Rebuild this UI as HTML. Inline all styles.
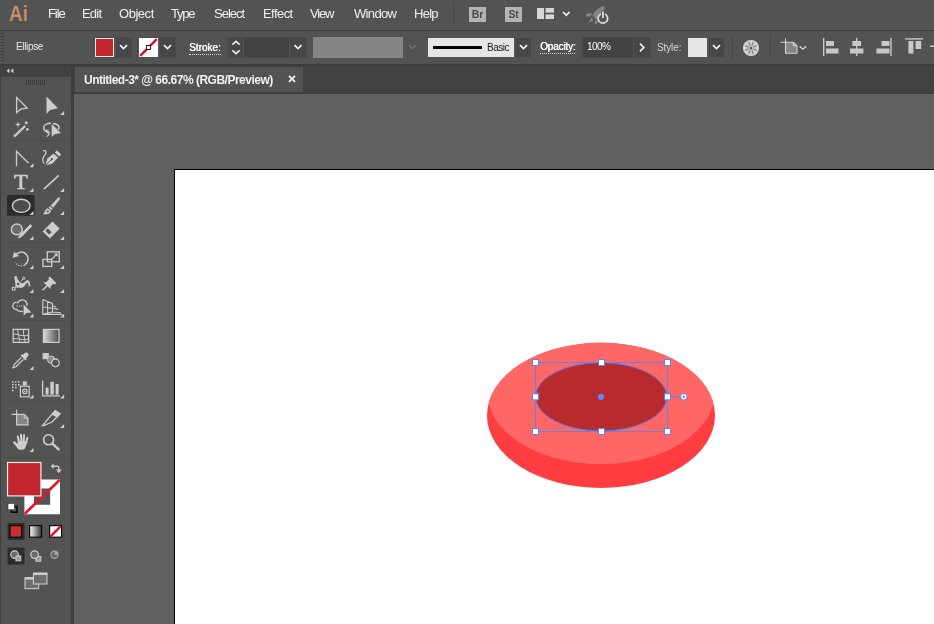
<!DOCTYPE html>
<html>
<head>
<meta charset="utf-8">
<title>Untitled-3</title>
<style>
html,body{margin:0;padding:0;}
body{width:934px;height:624px;overflow:hidden;background:#606060;font-family:"Liberation Sans","DejaVu Sans",sans-serif;position:relative;color:#e8e8e8;}
.abs{position:absolute;}
#menubar{left:0;top:0;width:934px;height:30px;background:#535353;}
.m,.lbl,#tabtext,.appbtn,#ailogo,#tools{will-change:transform;}
#menubar .m{position:absolute;top:6.4px;font-size:13px;color:#f0f0f0;line-height:16px;white-space:nowrap;}
#ailogo{position:absolute;left:8.5px;top:1px;font-size:22px;font-weight:bold;color:#c98f68;line-height:26px;transform:scaleX(0.86);transform-origin:0 0;}
#ctrlbar{left:0;top:31px;width:934px;height:33px;background:#535353;}
#sepline{left:0;top:30px;width:934px;height:1px;background:#3f3f3f;}
#tabbar{left:74px;top:66px;width:860px;height:28px;background:#424242;}
#tab{left:75px;top:67px;width:228px;height:25px;background:#535353;}
#tabtext{left:83.8px;top:72.5px;font-size:12px;font-weight:bold;color:#f0f0f0;white-space:nowrap;line-height:14px;letter-spacing:-0.5px;}
#gap{left:0;top:64px;width:934px;height:2px;background:#3c3c3c;}
#toolbox{left:0;top:66px;width:72px;height:558px;background:#535353;}
#tbhead{left:0;top:66px;width:72px;height:10.5px;background:#424242;}
#tbgap{left:71px;top:66px;width:3px;height:558px;background:#3d3d3d;}
#canvas{left:74px;top:94px;width:860px;height:530px;background:#606060;}
#artboard{left:174px;top:169px;width:760px;height:455px;background:#fff;border-left:1px solid #000;border-top:1px solid #000;}
.lbl{position:absolute;font-size:10px;color:#e8e8e8;white-space:nowrap;line-height:12px;}

.appbtn{position:absolute;top:7px;width:17px;height:15px;background:#b4b4b4;color:#4a4a4a;font-size:10.5px;font-weight:bold;line-height:15px;text-align:center;letter-spacing:-0.2px;}
.grp{position:absolute;border:1px solid #4a4a4a;box-sizing:border-box;border-radius:1px;}
.dd{position:absolute;background:#474747;}
.dd svg,.abs svg{display:block;}
.fld{position:absolute;background:#424242;}
.ul{border-bottom:1px dotted #d8d8d8;padding-bottom:0px;line-height:12px;}
</style>
</head>
<body>
<div id="menubar" class="abs">
  <div id="ailogo">Ai</div>
  <div class="m" style="left:47.5px;letter-spacing:-1.08px">File</div>
  <div class="m" style="left:82.4px;letter-spacing:-0.80px">Edit</div>
  <div class="m" style="left:119.4px;letter-spacing:-0.46px">Object</div>
  <div class="m" style="left:171.4px;letter-spacing:-1.20px">Type</div>
  <div class="m" style="left:214.3px;letter-spacing:-1.01px">Select</div>
  <div class="m" style="left:263.4px;letter-spacing:-0.56px">Effect</div>
  <div class="m" style="left:310.0px;letter-spacing:-1.22px">View</div>
  <div class="m" style="left:353.6px;letter-spacing:-0.67px">Window</div>
  <div class="m" style="left:414.4px;letter-spacing:-0.72px">Help</div>
  <div class="abs" style="left:453px;top:4px;width:1px;height:20px;background:#474747"></div>
  <div class="appbtn" style="left:469px">Br</div>
  <div class="appbtn" style="left:505px">St</div>
  <svg class="abs" style="left:536px;top:7px" width="36" height="14" viewBox="0 0 36 14">
    <rect x="1" y="1" width="7" height="11" fill="#d6d6d6"/>
    <rect x="9.5" y="1" width="8.5" height="4.6" fill="#d6d6d6"/>
    <rect x="9.5" y="7.4" width="8.5" height="4.6" fill="#d6d6d6"/>
    <path d="M27 5 L30.3 8.2 L33.6 5" fill="none" stroke="#f0f0f0" stroke-width="1.7"/>
  </svg>
  <svg class="abs" style="left:584px;top:3px" width="28" height="24" viewBox="584 3 28 24">
    <path d="M604.6 6 C599 7 594.5 11 592.5 15.5 L596.5 19.5 C601 17.5 604.2 12 604.6 6 Z M592 13 L587 13.6 L585.4 16.6 L590.6 16.4 Z M597.8 19.6 L597.4 23.6 L594.4 24 L595 21 Z M591.4 17.6 L588.6 22.4 L593.6 20.6 Z" fill="#858585"/>
    <circle cx="602.9" cy="18.4" r="4.7" fill="#535353" stroke="#dedede" stroke-width="1.8"/>
    <rect x="601" y="10.8" width="3.8" height="5.4" fill="#535353"/>
    <line x1="602.9" y1="11.4" x2="602.9" y2="18" stroke="#dedede" stroke-width="1.8"/>
  </svg>
</div>
<div id="sepline" class="abs"></div>
<div id="ctrlbar" class="abs">
  <div class="abs" style="left:1px;top:2px;width:3px;height:28px;background:repeating-linear-gradient(to bottom,#3c3c3c 0 1px,#535353 1px 3px)"></div>
  <div class="lbl" style="left:15.8px;top:9.7px;letter-spacing:-0.34px">Ellipse</div>
  <!-- fill swatch -->
  <div class="grp" style="left:93px;top:6px;width:39px;height:21px"></div>
  <div class="abs" style="left:95px;top:7px;width:17px;height:17px;background:#c1272d;border:1px solid #f0e6e6"></div>
  <div class="dd" style="left:116px;top:7px;width:15px;height:19px"><svg width="15" height="19"><path d="M4 7.2 L7.5 10.5 L11 7.2" fill="none" stroke="#f2f2f2" stroke-width="1.7"/></svg></div>
  <!-- stroke swatch -->
  <div class="grp" style="left:137px;top:6px;width:39px;height:21px"></div>
  <svg class="abs" style="left:139px;top:7px" width="19" height="19" viewBox="0 0 19 19">
    <rect x="0" y="0" width="19" height="19" fill="#ffffff"/>
    <line x1="1.2" y1="17.8" x2="17.8" y2="1.2" stroke="#d4142a" stroke-width="2.5"/>
    <rect x="7.5" y="7.5" width="4" height="4" fill="#fff" stroke="#3a1010" stroke-width="1"/>
  </svg>
  <div class="dd" style="left:160px;top:7px;width:15px;height:19px"><svg width="15" height="19"><path d="M4 7.2 L7.5 10.5 L11 7.2" fill="none" stroke="#f2f2f2" stroke-width="1.7"/></svg></div>
  <!-- Stroke -->
  <div class="lbl ul" style="left:188.7px;top:11.1px;color:#fff;text-shadow:0.45px 0 0 #fff">Stroke:</div>
  <div class="grp" style="left:227px;top:6px;width:80px;height:21px"></div>
  <div class="dd" style="left:229px;top:7px;width:14px;height:19px"><svg width="14" height="19"><path d="M3.4 6.6 L7 3.4 L10.6 6.6 M3.4 12.4 L7 15.6 L10.6 12.4" fill="none" stroke="#f2f2f2" stroke-width="1.6"/></svg></div>
  <div class="fld" style="left:244px;top:7px;width:45px;height:19px"></div>
  <div class="dd" style="left:290px;top:7px;width:16px;height:19px"><svg width="16" height="19"><path d="M4.5 7.2 L8 10.5 L11.5 7.2" fill="none" stroke="#f2f2f2" stroke-width="1.7"/></svg></div>
  <!-- gray var width profile -->
  <div class="abs" style="left:313px;top:6px;width:90px;height:21px;background:#858585"></div>
  <div class="abs" style="left:405px;top:7px;width:15px;height:19px"><svg width="15" height="19"><path d="M4 7.2 L7.5 10.5 L11 7.2" fill="none" stroke="#707070" stroke-width="1.7"/></svg></div>
  <!-- brush -->
  <div class="abs" style="left:428px;top:7px;width:86px;height:19px;background:#e6e6e6"></div>
  <div class="abs" style="left:433px;top:15px;width:49px;height:3px;background:#000"></div>
  <div class="lbl" style="left:486.5px;top:11px;color:#1a1a1a;letter-spacing:-0.49px">Basic</div>
  <div class="dd" style="left:516px;top:7px;width:15px;height:19px"><svg width="15" height="19"><path d="M4 7.2 L7.5 10.5 L11 7.2" fill="none" stroke="#f2f2f2" stroke-width="1.7"/></svg></div>
  <!-- opacity -->
  <div class="lbl ul" style="left:540.3px;top:10.1px;color:#fff;letter-spacing:-0.17px;text-shadow:0.45px 0 0 #fff">Opacity:</div>
  <div class="grp" style="left:581px;top:6px;width:70px;height:21px"></div>
  <div class="fld" style="left:583px;top:7px;width:50px;height:19px"></div>
  <div class="lbl" style="left:586.5px;top:10.1px;color:#fff;letter-spacing:-0.53px">100%</div>
  <div class="dd" style="left:634px;top:7px;width:16px;height:19px"><svg width="16" height="19"><path d="M6 5.6 L9.8 9.5 L6 13.4" fill="none" stroke="#f2f2f2" stroke-width="1.7"/></svg></div>
  <!-- style -->
  <div class="lbl" style="left:657px;top:10.5px;color:#d4d4d4;letter-spacing:-0.12px">Style:</div>
  <div class="abs" style="left:688px;top:7px;width:19px;height:19px;background:#e6e6e6"></div>
  <div class="dd" style="left:709px;top:7px;width:15px;height:19px"><svg width="15" height="19"><path d="M4 7.2 L7.5 10.5 L11 7.2" fill="none" stroke="#f2f2f2" stroke-width="1.7"/></svg></div>
  <div class="abs" style="left:732px;top:5px;width:1px;height:23px;background:#474747"></div>
  <!-- recolor wheel -->
  <svg class="abs" style="left:742px;top:7.5px" width="18" height="18" viewBox="0 0 18 18">
    <circle cx="9" cy="9" r="8.1" fill="#d2d2d2"/>
    <path d="M11.22 9.92 L14.73 11.37 M9.92 11.22 L11.37 14.73 M8.08 11.22 L6.63 14.73 M6.78 9.92 L3.27 11.37 M6.78 8.08 L3.27 6.63 M8.08 6.78 L6.63 3.27 M9.92 6.78 L11.37 3.27 M11.22 8.08 L14.73 6.63 " stroke="#858585" stroke-width="1.5" fill="none"/>
    <circle cx="9" cy="9" r="1.5" fill="#5a5a5a"/>
  </svg>
  <div class="abs" style="left:770px;top:5px;width:1px;height:23px;background:#474747"></div>
  <!-- doc setup -->
  <svg class="abs" style="left:778px;top:5px" width="32" height="22" viewBox="778 36 32 22">
    <path d="M785.5 38.4 V42 M780.6 42.3 H785" stroke="#cfcfcf" stroke-width="1" fill="none"/>
    <path d="M785.5 42.3 H793.4 L796.9 45.8 V53.2 H785.5 Z" fill="#858585" stroke="#d4d4d4" stroke-width="1.1"/>
    <path d="M793.4 42.3 V45.8 H796.9" fill="none" stroke="#d4d4d4" stroke-width="1"/>
    <path d="M799.6 46.4 L802.9 49.2 L806.2 46.4" fill="none" stroke="#cfcfcf" stroke-width="1.4"/>
  </svg>
  <!-- align icons -->
  <svg class="abs" style="left:820px;top:6px" width="114" height="20" viewBox="0 0 114 20">
    <g fill="#c8c8c8">
      <rect x="3" y="1" width="1.4" height="18"/>
      <rect x="6" y="4" width="8" height="5"/><rect x="6" y="11.5" width="12.5" height="5"/>
      <rect x="36" y="1" width="1.4" height="18"/>
      <rect x="32.3" y="4" width="8.8" height="5"/><rect x="30" y="11.5" width="13.4" height="5"/>
      <rect x="70.3" y="1" width="1.4" height="18"/>
      <rect x="61.5" y="4" width="8" height="5"/><rect x="56.5" y="11.5" width="13" height="5"/>
      <rect x="85" y="1.2" width="18" height="1.4"/>
      <rect x="88.4" y="4" width="5" height="12.6"/><rect x="95.6" y="4" width="5.6" height="8"/>
      <rect x="110" y="8.5" width="4" height="1.4"/>
    </g>
  </svg>
</div>
<div id="gap" class="abs"></div>
<div id="canvas" class="abs"></div>
<div id="tabbar" class="abs"></div>
<div id="tab" class="abs"></div>
<div id="tabtext" class="abs">Untitled-3* @ 66.67% (RGB/Preview)</div>
<div class="abs" style="left:74px;top:92px;width:860px;height:2px;background:#3e3e3e"></div>
<svg class="abs" style="left:287px;top:74px" width="10" height="10" viewBox="0 0 10 10"><path d="M2 1.8 L8 7.8 M8 1.8 L2 7.8" stroke="#ececec" stroke-width="1.9" fill="none"/></svg>
<div id="toolbox" class="abs"></div>
<div id="tbhead" class="abs"></div>
<div id="tbgap" class="abs"></div>
<div class="abs" style="left:0;top:66px;width:1px;height:558px;background:#404040"></div>
<svg id="tools" class="abs" style="left:0;top:66px" width="72" height="558" viewBox="0 66 72 558">
<g fill="none" stroke="#cdcdcd" stroke-width="1.3" stroke-linejoin="miter">
<!-- header chevrons -->
<path d="M9.4 68.4 L6.6 70.8 L9.4 73.2 Z M13.4 68.4 L10.6 70.8 L13.4 73.2 Z" fill="#d8d8d8" stroke="none"/>
<!-- grip -->
<path d="M26.5 80v5M28.5 80v5M30.5 80v5M32.5 80v5M34.5 80v5M36.5 80v5M38.5 80v5M40.5 80v5M42.5 80v5M44.5 80v5" stroke="#3d3d3d" stroke-width="1"/>
<!-- separators -->
<path d="M7 140.5H65M7 242.5H65M7 320.5H65M7 401.5H65M7 457.5H65" stroke="#4c4c4c" stroke-width="1"/>
<!-- 1 selection -->
<path d="M16.6 97.6 L16.6 112.6 L20.8 109 L27.2 108 Z"/>
<!-- 2 direct selection -->
<path d="M46.5 96.6 L46.5 114 L50 110 L58 108.2 Z" fill="#cdcdcd" stroke="none"/>
<path d="M64.1 111.0 L64.1 115.0 L60.1 115.0 Z" fill="#cdcdcd" stroke="none"/>
<!-- 3 magic wand -->
<path d="M14 136.6 L25.2 126" stroke-width="2.2"/>
<path d="M18 121.6 L18.8 123.8 L21 124.5 L18.8 125.2 L18 127.4 L17.2 125.2 L15 124.5 L17.2 123.8 Z" fill="#cdcdcd" stroke="none"/>
<circle cx="26.2" cy="122.8" r="1.5" fill="#cdcdcd" stroke="none"/>
<circle cx="27.4" cy="129.4" r="1.3" fill="#cdcdcd" stroke="none"/>
<!-- 4 lasso -->
<path d="M51 123.3 C46.5 123.3 43.7 125.3 43.7 127.8 C43.7 130 45.6 131.4 48.2 131.9 M53 123.4 C56.5 123.8 59 125.4 59 127.6 C59 128.4 58.7 129 58.2 129.6" stroke-width="1.5"/>
<path d="M48.6 130 C46.6 129.6 45.8 131.2 46.8 132.4 C47.8 133.4 49.2 132.6 48.8 131.2 C49.6 133.5 48.8 135.6 46.6 136.4" stroke-width="1.1"/>
<path d="M51.7 124 L51.7 137 L54.6 134.2 L61 133 Z" fill="#cdcdcd" stroke="none"/>
<!-- 5 anchor/pen -->
<path d="M16.5 166.2 L16.5 151.2 L28.6 163.2"/>
<path d="M33.5 163.2 L33.5 167.2 L29.5 167.2 Z" fill="#cdcdcd" stroke="none"/>
<!-- 6 curvature pen -->
<path d="M43 150.8 C46.5 149.6 46.8 153 44.6 155.4 C42.4 157.8 42 161.6 44.4 163.6" stroke-width="1.3"/>
<path d="M45.4 165.6 L47.4 158.6 L53.6 153.4 L58 157.6 L52.6 163.6 Z" fill="#cdcdcd" stroke="none"/>
<path d="M54.8 152.4 L57 150.2 L61.2 154.4 L59 156.6 Z" fill="#cdcdcd" stroke="none"/>
<path d="M45.8 165.2 L51.4 159.6" stroke="#535353" stroke-width="1"/>
<circle cx="51.8" cy="159.2" r="1.1" fill="#535353" stroke="none"/>
<!-- 7 type -->
<text transform="translate(21 0) scale(1.13 1) translate(-21 0)" x="21" y="189.2" font-family="Liberation Serif, serif" font-size="20" text-anchor="middle" fill="#cdcdcd" stroke="#cdcdcd" stroke-width="0.6" stroke-linejoin="miter">T</text>
<path d="M33.5 188.0 L33.5 192.0 L29.5 192.0 Z" fill="#cdcdcd" stroke="none"/>
<!-- 8 line -->
<path d="M43.8 189.2 L58.8 175.4" stroke-width="1.6"/>
<path d="M64.1 188.0 L64.1 192.0 L60.1 192.0 Z" fill="#cdcdcd" stroke="none"/>
<!-- 9 ellipse (selected) -->
<rect x="7" y="195" width="27.6" height="20.8" rx="1.5" fill="#2c2c2c" stroke="none"/>
<ellipse cx="21.2" cy="205.8" rx="8.8" ry="6.6" stroke-width="1.4" fill="#4c4c4c"/>
<path d="M33.5 211.0 L33.5 215.0 L29.5 215.0 Z" fill="#cdcdcd" stroke="none"/>
<!-- 10 paintbrush -->
<path d="M59.6 197.4 L58.6 197.2 L50.8 205.4 L53.2 207.8 L60 199 Z" fill="#cdcdcd" stroke="none"/>
<path d="M50.2 206.2 L52.6 208.6 L51.2 210.2 L48.6 207.6 Z" fill="#cdcdcd" stroke="none"/>
<path d="M47.8 208.2 C45 208.8 45.6 212 42.8 214 C46.6 214.8 51 214 50.8 210.8 Z" fill="#cdcdcd" stroke="none"/><circle cx="47.8" cy="211.4" r="1" fill="#535353" stroke="none"/>
<path d="M64.1 211.0 L64.1 215.0 L60.1 215.0 Z" fill="#cdcdcd" stroke="none"/>
<!-- 11 shaper -->
<circle cx="16.8" cy="229.4" r="5.4" stroke-width="1.4" fill="#6a6a6a"/>
<path d="M30.4 224.6 L31.8 226 L21.6 236.6 L18.6 237.8 L20 234.8 Z" fill="#cdcdcd" stroke="#cdcdcd" stroke-width="0.9"/>
<path d="M33.5 236.0 L33.5 240.0 L29.5 240.0 Z" fill="#cdcdcd" stroke="none"/>
<!-- 12 eraser -->
<path d="M52.4 221.4 L59.6 228.6 L50 238.6 L42.6 231.4 Z" fill="#cdcdcd" stroke="none"/>
<path d="M45.4 230.8 L47.8 228.4 L51.6 232.2 L49.2 234.6 Z" fill="#535353" stroke="none"/>
<path d="M64.1 236.0 L64.1 240.0 L60.1 240.0 Z" fill="#cdcdcd" stroke="none"/>
<!-- 13 rotate -->
<path d="M15.2 255.6 A6.9 6.9 0 1 1 24.6 265.0" stroke-width="1.5"/>
<path d="M12.6 257.8 L14 251.8 L19.2 256 Z" fill="#cdcdcd" stroke="none"/>
<path d="M24.6 265.0 A6.9 6.9 0 0 1 15.2 262.4" stroke-width="1.3" stroke-dasharray="1.3 1.3"/>
<path d="M33.5 265.0 L33.5 269.0 L29.5 269.0 Z" fill="#cdcdcd" stroke="none"/>
<!-- 14 scale -->
<rect x="42.9" y="259.4" width="8.8" height="7"/>
<rect x="47.3" y="251.8" width="12" height="10"/>
<path d="M51.2 259.6 L56.8 254.2" stroke-width="1.3"/>
<path d="M54 253.4 L57.8 253.2 L57.6 257 Z" fill="#cdcdcd" stroke="none"/>
<path d="M64.1 265.0 L64.1 269.0 L60.1 269.0 Z" fill="#cdcdcd" stroke="none"/>
<!-- 15 width/warp -->
<path d="M14.2 276.4 L16.6 276 C17 279 18.5 281 20.5 282.5 C22.5 284 24 283 25.2 281.6 C26.6 280 28.8 279.8 29.6 282 C30.2 283.6 30.4 285 30.2 286.2 L28.6 286.2 C28.6 284 28.2 282.8 27.4 282.8 C26.4 282.8 25.8 284.4 24.6 286 C23.6 287.4 22 287.8 20 287.8 L15.4 287.6 C15.8 284 14.6 280 14.2 276.4 Z" fill="#cdcdcd" stroke="none"/>
<circle cx="18.2" cy="284" r="1.3" fill="#535353" stroke="none"/>
<circle cx="23.8" cy="278.2" r="1.2" stroke-width="1"/>
<path d="M22.8 279.2 L21.2 280.8" stroke-width="1"/>
<rect x="12.4" y="287.4" width="2.6" height="2.6" stroke-width="1" fill="#535353"/>
<path d="M33.5 289.0 L33.5 293.0 L29.5 293.0 Z" fill="#cdcdcd" stroke="none"/>
<!-- 16 pin -->
<path d="M49.6 276.6 L56.2 283.2 L54.4 284.4 L52.8 283.8 L50.4 286.6 L50.2 289 L43.4 282.4 L46 282 L48.8 279.6 L48.2 278 Z" fill="#cdcdcd" stroke="none" transform="translate(0.2,0)"/>
<path d="M47 285.8 L42.6 290.2" stroke-width="1.6"/>
<path d="M64.1 289.0 L64.1 293.0 L60.1 293.0 Z" fill="#cdcdcd" stroke="none"/>
<!-- 17 shape builder -->
<path d="M22.8 311.2 C19.8 311.8 17.4 311 16.8 309.4 C13.6 309.6 11.8 306.6 13.2 304.2 C14.2 302.4 16.6 302 18 302.6 C19 300 22.6 299 25 300.8 C26.8 302.2 27.4 304.2 26.8 305.8" stroke-width="1.3"/>
<path d="M16.4 306h1.3M18.8 306h1.3M21.2 306h1.3" stroke-width="1.2"/>
<path d="M23.6 304.4 L23.6 315.6 L26.4 313 L31.4 312.4 Z" fill="#cdcdcd" stroke="none"/>
<path d="M33.5 313.6 L33.5 317.6 L29.5 317.6 Z" fill="#cdcdcd" stroke="none"/>
<!-- 18 perspective grid -->
<path d="M42.8 299.6 V314.4 M42.8 299.6 L52.4 303.4 V312 M42.8 307 L52.4 308 M47.6 301.6 V313.2 M42.8 314.4 L52.4 312 M42.8 314.4 H62 M52.4 312 L61 312.8 M52.4 308 L58 309.4 M52.4 305.6 L56 307" stroke-width="1.1"/>
<path d="M64.1 313.6 L64.1 317.6 L60.1 317.6 Z" fill="#cdcdcd" stroke="none"/>
<!-- 19 mesh -->
<rect x="13.2" y="329.4" width="15.4" height="13"/>
<path d="M13.2 334.6 C17 332.6 20 337.4 28.6 335 M18.4 329.4 C16.4 334 21 338 19 342.4 M24 329.4 C22 334 26 338 24.4 342.4 M13.2 339 C18 337.6 22 341 28.6 339" stroke-width="1"/>
<!-- 20 gradient -->
<defs><linearGradient id="gr1" x1="0" x2="1" y1="0" y2="0"><stop offset="0" stop-color="#dcdcdc"/><stop offset="1" stop-color="#4a4a4a"/></linearGradient>
<linearGradient id="gr2" x1="0" x2="1" y1="0" y2="0"><stop offset="0" stop-color="#ffffff"/><stop offset="1" stop-color="#303030"/></linearGradient></defs>
<rect x="43.4" y="329.4" width="15.6" height="13" fill="url(#gr1)" stroke-width="1.2"/>
<!-- 21 eyedropper -->
<path d="M25.4 352.6 C27.4 351.8 29.2 353.8 28.4 355.8 L26 358.2 L26.8 359 L25.4 360.4 L20.6 355.6 L22 354.2 L22.8 355 Z" fill="#cdcdcd" stroke="none"/>
<path d="M21.4 357.4 L14 364.8 L13 367.8 L16 366.8 L23.4 359.4" stroke-width="1.3"/>
<path d="M33.5 366.0 L33.5 370.0 L29.5 370.0 Z" fill="#cdcdcd" stroke="none"/>
<!-- 22 blend -->
<rect x="42.6" y="353" width="6.2" height="6.2" fill="#cdcdcd" stroke="none"/>
<circle cx="51" cy="359.6" r="3.6" fill="#8a8a8a" stroke="#cdcdcd" stroke-width="1"/>
<circle cx="55.4" cy="362.8" r="3.8" fill="#535353" stroke-width="1.3"/>
<!-- 23 symbol sprayer -->
<rect x="20.4" y="386.2" width="8.8" height="10.6" stroke-width="1.2"/>
<rect x="22.8" y="381.4" width="4" height="4" fill="#cdcdcd" stroke="none"/>
<circle cx="24.8" cy="391.4" r="2.2" stroke-width="1.2"/>
<circle cx="24.8" cy="391.4" r="0.7" fill="#cdcdcd" stroke="none"/>
<path d="M12 382h1.6M15 382h1.6M18 382h1.6M12 384.8h1.6M15 384.8h1.6M18 384.8h1.6M12 387.6h1.6M15 387.6h1.6M12 390.4h1.6" stroke-width="1.5"/>
<path d="M33.5 394.4 L33.5 398.4 L29.5 398.4 Z" fill="#cdcdcd" stroke="none"/>
<!-- 24 graph -->
<path d="M42.6 380.6 V395.8 H60" stroke-width="1.3"/>
<rect x="45.6" y="387.6" width="3" height="7" fill="#cdcdcd" stroke="none"/>
<rect x="50.4" y="381.8" width="3.4" height="12.8" fill="#cdcdcd" stroke="none"/>
<rect x="55.6" y="384" width="3" height="10.6" fill="#cdcdcd" stroke="none"/>
<path d="M64.1 394.4 L64.1 398.4 L60.1 398.4 Z" fill="#cdcdcd" stroke="none"/>
<!-- 25 artboard -->
<path d="M16.6 409.4 V415 M11.6 414.4 H17" stroke-width="1.1"/>
<path d="M16.6 414.4 H24.2 L28 418.2 V424.8 H16.6 Z" fill="#858585" stroke-width="1.2"/>
<path d="M24.2 414.4 V418.2 H28" stroke-width="1"/>
<!-- 26 slice -->
<path d="M55.2 410.6 L60.2 413.8 L52 422 L43.6 425.6 L42.4 425.6 Z" stroke-width="1.3"/>
<path d="M55.2 410.6 L60.2 413.8 L57 417.4 L51.4 414.4 Z" fill="#cdcdcd" stroke="none"/>
<path d="M64.1 424.0 L64.1 428.0 L60.1 428.0 Z" fill="#cdcdcd" stroke="none"/>
<!-- 27 hand -->
<g stroke="#cdcdcd" stroke-width="2.1" stroke-linecap="round" fill="none">
<path d="M17.8 436.6 L19.2 443"/><path d="M20.9 434.8 L21.4 442"/><path d="M24 435.4 L23.6 442"/><path d="M27.3 438 L25.8 443.6"/><path d="M14.2 442.4 L18.4 447" stroke-width="2.4"/>
</g>
<path d="M18 441 L26.8 441.6 L26 446 C25.4 448.4 24.4 449.8 22.4 449.8 H20.2 C18.2 449.8 17 448 16.4 446 Z" fill="#cdcdcd" stroke="none"/>
<path d="M33.5 448.0 L33.5 452.0 L29.5 452.0 Z" fill="#cdcdcd" stroke="none"/>
<!-- 28 zoom -->
<circle cx="48.6" cy="439.8" r="5" stroke-width="1.6"/>
<path d="M52.4 443.6 L58.6 449.4" stroke-width="2.4" stroke-linecap="round"/>
</g>
<!-- color section -->
<g stroke="none">
<!-- stroke box -->
<path d="M24.4 479.6 H60 V514.2 H24.4 Z M34 488.6 V504.8 H50.2 V488.6 Z" fill="#ffffff" fill-rule="evenodd" stroke="none"/>
<path d="M24.8 513.8 L59.6 480" stroke="#ea1228" stroke-width="2.6" fill="none"/>
<!-- fill box -->
<rect x="7.5" y="462.5" width="33.4" height="33.4" fill="#c1272d" stroke="#f2eaea" stroke-width="1.2"/>
<!-- swap arrows -->
<path d="M52.6 466.2 H57.4 C58.4 466.2 58.8 466.8 58.8 467.6 V470.4" fill="none" stroke="#cdcdcd" stroke-width="1.4"/>
<path d="M53.6 463.4 L50.6 466.2 L53.6 469 Z" fill="#cdcdcd" stroke="none"/>
<path d="M56 469.6 L58.8 473.2 L61.6 469.6 Z" fill="#cdcdcd" stroke="none"/>
<!-- default fill/stroke -->
<rect x="11.4" y="506.6" width="5.6" height="5.6" fill="#535353" stroke="#0a0a0a" stroke-width="1.6"/>
<rect x="8" y="503.4" width="6.4" height="6.4" fill="#ffffff" stroke="#2a2a2a" stroke-width="0.6"/>
<!-- colour / gradient / none -->
<rect x="7.6" y="523" width="17" height="16.8" rx="1" fill="#2c2c2c"/>
<rect x="10" y="525.6" width="11.6" height="11.6" fill="#c9302c" stroke="#0a0a0a" stroke-width="1.2"/>
<rect x="29.6" y="525.6" width="12" height="11.6" fill="url(#gr2)" stroke="#0a0a0a" stroke-width="1.2"/>
<rect x="49.6" y="525.6" width="12" height="11.6" fill="#ffffff" stroke="#0a0a0a" stroke-width="1.2"/>
<path d="M50.6 536.4 L60.6 526.4" stroke="#ea1228" stroke-width="2.6" fill="none"/>
<!-- draw modes -->
<rect x="7.6" y="547.6" width="17" height="16.8" rx="1" fill="#2c2c2c"/>
<circle cx="14.6" cy="554.6" r="3.8" fill="#6a6a6a" stroke="#cdcdcd" stroke-width="1.2"/>
<rect x="16" y="556" width="4.8" height="4.8" fill="#9a9a9a" stroke="#cdcdcd" stroke-width="1"/>
<rect x="36" y="556.4" width="4.8" height="4.8" fill="#9a9a9a" stroke="#cdcdcd" stroke-width="1"/>
<circle cx="34.6" cy="554.6" r="3.8" fill="#6a6a6a" stroke="#cdcdcd" stroke-width="1.2"/>
<circle cx="54.6" cy="554.8" r="3.6" fill="#6a6a6a" stroke="#a8a8a8" stroke-width="1.2"/>
<path d="M54.6 551.6 A3.2 3.2 0 0 1 57.8 554.8 H54.6 Z" fill="#a8a8a8"/>
<!-- screen mode -->
<rect x="25" y="577.6" width="13.6" height="11" fill="#6e6e6e" stroke="#cdcdcd" stroke-width="1.1"/>
<rect x="25" y="577.6" width="13.6" height="2" fill="#cdcdcd"/>
<rect x="33.4" y="573" width="13.6" height="11" fill="#6e6e6e" stroke="#cdcdcd" stroke-width="1.1"/>
<rect x="33.4" y="573" width="13.6" height="2" fill="#cdcdcd"/>
</g>
</svg>
<div id="artboard" class="abs"></div>
<svg id="art" class="abs" style="left:175px;top:170px" width="759" height="454" viewBox="175 170 759 454">
<defs><clipPath id="e1clip"><ellipse cx="601" cy="415.4" rx="114" ry="72.6"/></clipPath></defs>
<ellipse cx="601" cy="415.4" rx="114" ry="72.6" fill="#ff3d40"/>
<ellipse cx="601" cy="391.6" rx="114" ry="72.6" fill="#ff6666" clip-path="url(#e1clip)"/>
<ellipse cx="601.2" cy="396.8" rx="65.6" ry="34.2" fill="#b92a2d" stroke="#5d7be0" stroke-width="1"/>
<rect x="535.5" y="362.5" width="132" height="69" fill="none" stroke="#5b84f5" stroke-width="1"/>
<path d="M670 396.8 H681" stroke="#5b84f5" stroke-width="1" fill="none"/>
<g fill="#ffffff" stroke="#5b84f5" stroke-width="1">
<rect x="532.5" y="359.5" width="6" height="6"/><rect x="598.5" y="359.5" width="6" height="6"/><rect x="664.5" y="359.5" width="6" height="6"/>
<rect x="532.5" y="393.8" width="6" height="6"/><rect x="664.5" y="393.8" width="6" height="6"/>
<rect x="532.5" y="428.5" width="6" height="6"/><rect x="598.5" y="428.5" width="6" height="6"/><rect x="664.5" y="428.5" width="6" height="6"/>
<circle cx="683.8" cy="396.8" r="3.3"/>
</g>
<circle cx="683.8" cy="396.8" r="1.2" fill="#5b84f5"/>
<circle cx="601" cy="396.8" r="3.1" fill="#5b8af6"/>
</svg>
</body>
</html>
